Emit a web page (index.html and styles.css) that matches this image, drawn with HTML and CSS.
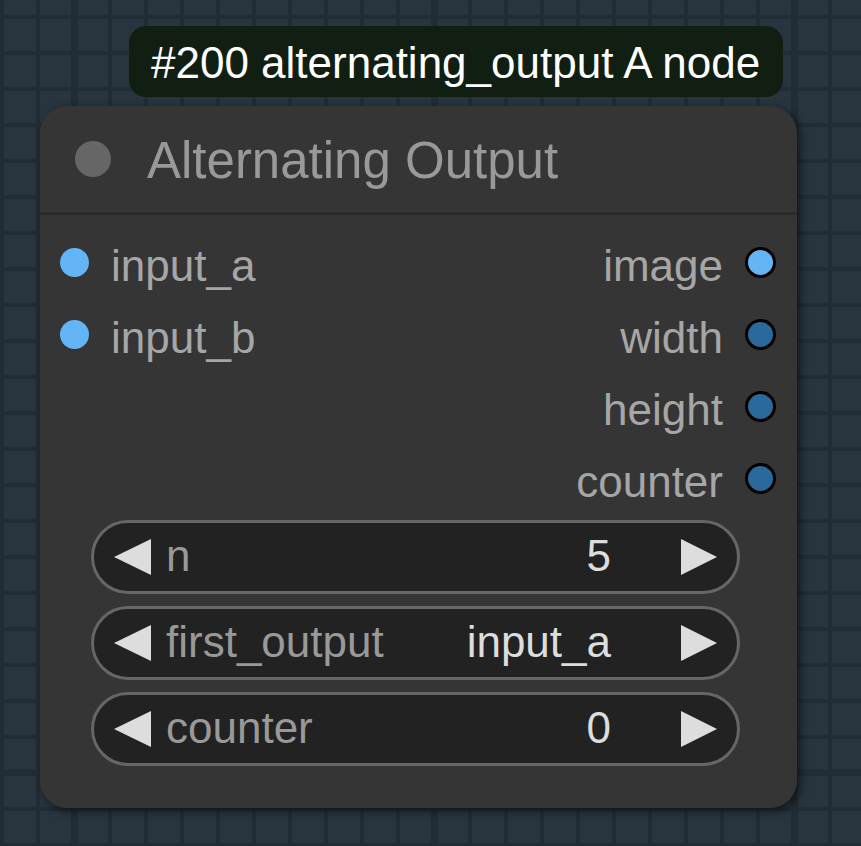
FILE: index.html
```html
<!DOCTYPE html>
<html lang="en">
<head>
<meta charset="utf-8">
<title>Alternating Output</title>
<link rel="stylesheet" href="styles.css">
</head>
<body>
<div class="canvas">
  <div class="node-wrap">
    <div class="badge">#200 alternating_output A node</div>
    <div class="node">
      <div class="node-title">
        <span class="title-dot"></span>
        <span class="title-text">Alternating Output</span>
      </div>
      <div class="slots">
        <div class="inputs">
          <div class="slot-row"><span class="slot-dot image"></span><span class="slot-label">input_a</span></div>
          <div class="slot-row"><span class="slot-dot image"></span><span class="slot-label">input_b</span></div>
        </div>
        <div class="outputs">
          <div class="slot-row"><span class="slot-label">image</span><span class="slot-dot out image"></span></div>
          <div class="slot-row"><span class="slot-label">width</span><span class="slot-dot out int"></span></div>
          <div class="slot-row"><span class="slot-label">height</span><span class="slot-dot out int"></span></div>
          <div class="slot-row"><span class="slot-label">counter</span><span class="slot-dot out int"></span></div>
        </div>
      </div>
      <div class="widgets">
        <div class="widget">
          <span class="arrow left"></span>
          <span class="w-label">n</span>
          <span class="w-value">5</span>
          <span class="arrow right"></span>
        </div>
        <div class="widget">
          <span class="arrow left"></span>
          <span class="w-label">first_output</span>
          <span class="w-value">input_a</span>
          <span class="arrow right"></span>
        </div>
        <div class="widget">
          <span class="arrow left"></span>
          <span class="w-label">counter</span>
          <span class="w-value">0</span>
          <span class="arrow right"></span>
        </div>
      </div>
    </div>
  </div>
</div>
</body>
</html>
```
FILE: styles.css
```css
* { box-sizing: border-box; }

html, body {
  margin: 0;
  padding: 0;
}

body {
  width: 861px;
  height: 846px;
  overflow: hidden;
  font-family: "Liberation Sans", Arial, sans-serif;
  background-color: #28343e;
  background-image:
    linear-gradient(to bottom, transparent 769px, #212c35 769px, #212c35 776px, transparent 776px),
    repeating-linear-gradient(to right, transparent 0, transparent 71px, #212c35 71px, #212c35 78px, transparent 78px, transparent 360px),
    repeating-linear-gradient(to right, #212c35 0, #212c35 4px, transparent 4px, transparent 36px),
    repeating-linear-gradient(to bottom, transparent 0, transparent 15px, #212c35 15px, #212c35 19px, transparent 19px, transparent 36px);
}

.canvas {
  position: relative;
  width: 861px;
  height: 846px;
}

.node-wrap {
  position: absolute;
  left: 40px;
  top: 26px;
  display: flex;
  flex-direction: column;
  align-items: flex-start;
}

.badge {
  margin-left: 89px;
  height: 71px;
  padding: 0 23px 0 22px;
  display: flex;
  align-items: center;
  padding-top: 2px;
  background: #101f11;
  border-radius: 17px;
  color: #ffffff;
  font-size: 44px;
  white-space: nowrap;
}

.node {
  margin-top: 9px;
  width: 757px;
  height: 702px;
  background: #353535;
  border-radius: 27px;
  box-shadow: 3px 3px 8px rgba(0, 0, 0, 0.55);
  display: flex;
  flex-direction: column;
}

.node-title {
  height: 109px;
  display: flex;
  align-items: center;
  padding-left: 35px;
  border-bottom: 3px solid #2b2b2b;
  gap: 36px;
}

.title-dot {
  width: 36px;
  height: 36px;
  border-radius: 50%;
  background: #666666;
  flex: none;
}

.title-text {
  font-size: 51px;
  line-height: 1;
  color: #999999;
  padding-top: 3px;
  white-space: nowrap;
}

.slots {
  display: flex;
  justify-content: space-between;
  padding: 12px 21px 0 20px;
  height: 300px;
}

.inputs, .outputs {
  display: flex;
  flex-direction: column;
}

.outputs {
  align-items: flex-end;
}

.slot-row {
  height: 71.8px;
  display: flex;
  align-items: center;
  gap: 22px;
}

.slot-label {
  font-size: 44px;
  line-height: 1;
  color: #a6a6a6;
  padding-top: 7px;
  white-space: nowrap;
}

.slot-dot {
  width: 29px;
  height: 29px;
  border-radius: 50%;
  flex: none;
}

.slot-dot.image { background: #64b5f6; }

.slot-dot.out {
  width: 31px;
  height: 31px;
  border: 3px solid #000000;
}

.slot-dot.int { background: #29699c; }

.widgets {
  display: flex;
  flex-direction: column;
  gap: 12px;
  padding: 5px 57px 0 51px;
}

.widget {
  height: 74px;
  border: 3px solid #666666;
  border-radius: 37px;
  background: #222222;
  display: flex;
  align-items: center;
  padding: 0 20px;
}

.arrow {
  width: 0;
  height: 0;
  border-top: 18px solid transparent;
  border-bottom: 18px solid transparent;
  flex: none;
}

.arrow.left {
  border-right: 37px solid #dddddd;
}

.arrow.right {
  border-left: 36px solid #dddddd;
  margin-left: 70px;
}

.w-label {
  margin-left: 15px;
  font-size: 44px;
  line-height: 1;
  color: #999999;
  white-space: nowrap;
  padding-bottom: 3px;
}

.w-value {
  margin-left: auto;
  font-size: 44px;
  line-height: 1;
  color: #dddddd;
  white-space: nowrap;
  padding-bottom: 3px;
}
```
